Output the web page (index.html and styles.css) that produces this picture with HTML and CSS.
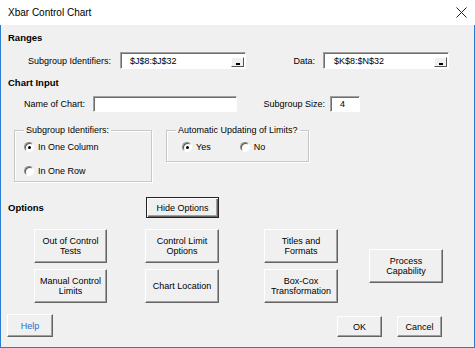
FILE: index.html
```html
<!DOCTYPE html>
<html lang="en">
<head>
    <meta charset="UTF-8">
    <title>Xbar Control Chart</title>
    <link rel="stylesheet" href="styles.css">
</head>
<body>
    <div class="dialog">
        <div class="titlebar">
            <span class="title">Xbar Control Chart</span>
            <svg class="close" width="11" height="11" viewBox="0 0 11 11">
                <path d="M0.5 0.5 L10.5 10.5 M10.5 0.5 L0.5 10.5" stroke="#222" stroke-width="1" fill="none"/>
            </svg>
        </div>
        <div class="form">
            <div class="heading ranges">Ranges</div>
            <div class="row ranges-row">
                <label class="lbl lbl-subgroup">Subgroup Identifiers:</label>
                <div class="refedit ref-subgroup">
                    <span class="val">$J$8:$J$32</span>
                    <span class="ref-btn"></span>
                </div>
                <label class="lbl lbl-data">Data:</label>
                <div class="refedit ref-data">
                    <span class="val">$K$8:$N$32</span>
                    <span class="ref-btn"></span>
                </div>
            </div>

            <div class="heading chart-input">Chart Input</div>
            <div class="row input-row">
                <label class="lbl lbl-name">Name of Chart:</label>
                <div class="textbox box-name"></div>
                <label class="lbl lbl-size">Subgroup Size:</label>
                <div class="textbox box-size">4</div>
            </div>

            <div class="row groups-row">
                <fieldset class="groupbox group-ids">
                    <legend>Subgroup Identifiers:</legend>
                    <div class="radio-row first">
                        <span class="radio checked"></span>In One Column
                    </div>
                    <div class="radio-row">
                        <span class="radio"></span>In One Row
                    </div>
                </fieldset>
                <fieldset class="groupbox group-auto">
                    <legend>Automatic Updating of Limits?</legend>
                    <div class="radio-line">
                        <div class="radio-row first">
                            <span class="radio checked"></span>Yes
                        </div>
                        <div class="radio-row no">
                            <span class="radio"></span>No
                        </div>
                    </div>
                </fieldset>
            </div>

            <div class="row options-row">
                <div class="heading">Options</div>
                <div class="btn btn-default hide-btn">Hide Options</div>
            </div>

            <div class="row option-buttons">
                <div class="col col1">
                    <div class="btn opt">Out of Control<br>Tests</div>
                    <div class="btn opt">Manual Control<br>Limits</div>
                </div>
                <div class="col col2">
                    <div class="btn opt">Control Limit<br>Options</div>
                    <div class="btn opt">Chart Location</div>
                </div>
                <div class="col col3">
                    <div class="btn opt">Titles and<br>Formats</div>
                    <div class="btn opt">Box-Cox<br>Transformation</div>
                </div>
                <div class="col col4">
                    <div class="btn opt">Process<br>Capability</div>
                </div>
            </div>

            <div class="row bottom-row">
                <div class="btn help-btn">Help</div>
                <div class="btn ok-btn">OK</div>
                <div class="btn cancel-btn">Cancel</div>
            </div>
        </div>
    </div>
</body>
</html>
```

FILE: styles.css
```css
body {
    margin: 0;
    padding: 0;
    font-family: "Liberation Sans", Arial, sans-serif;
    font-size: 9px;
    color: #000;
    background: #fff;
}
.dialog {
    width: 475px;
    height: 348px;
}
.titlebar {
    height: 25px;
    background: #fff;
    display: flex;
    align-items: center;
    padding: 0 8px;
    box-sizing: border-box;
}
.title {
    font-size: 10px;
    color: #000;
}
.close {
    margin-left: auto;
    margin-right: 0;
}
.form {
    height: 323px;
    background: #f0f0f0;
    border: 1px solid #2b7bd0;
    border-top: none;
    box-sizing: border-box;
}
.heading {
    font-weight: bold;
    font-size: 9.5px;
    line-height: 12px;
    margin-left: 7px;
}
.ranges {
    padding-top: 7px;
}
.row {
    display: flex;
    align-items: center;
}
.lbl {
    text-align: right;
    line-height: 12px;
}
.ranges-row {
    margin-top: 8px;
}
.lbl-subgroup {
    width: 92px;
    margin-left: 18px;
}
.refedit, .textbox {
    background: #fff;
    border: 1px solid;
    border-color: #a0a0a0 #fff #fff #a0a0a0;
    box-shadow: inset 1px 1px #6e6e6e;
    box-sizing: border-box;
    display: flex;
    align-items: center;
}
.refedit {
    height: 17px;
    width: 126px;
    margin-left: 9px;
}
.refedit .val {
    padding-left: 9px;
}
.ref-btn {
    margin-left: auto;
    align-self: flex-end;
    width: 13px;
    height: 10px;
    margin-bottom: 1px;
    margin-right: 1px;
    background: #f0f0f0;
    border: 1px solid;
    border-color: #fff #555 #555 #fff;
    box-sizing: border-box;
    display: flex;
    justify-content: center;
    align-items: flex-end;
}
.ref-btn::after {
    content: "";
    width: 4px;
    height: 2px;
    background: #000;
    margin-bottom: 1px;
}
.lbl-data {
    width: 56px;
    margin-left: 13px;
}
.ref-data {
    margin-left: 8px;
}
.ref-data .val {
    padding-left: 10px;
}
.chart-input {
    margin-top: 8px;
}
.input-row {
    margin-top: 7px;
}
.lbl-name {
    width: 66px;
    margin-left: 18px;
}
.textbox {
    height: 16px;
}
.box-name {
    width: 144px;
    margin-left: 8px;
}
.lbl-size {
    width: 85px;
    margin-left: 3px;
}
.box-size {
    width: 30px;
    margin-left: 5px;
    padding-left: 9px;
}
.groups-row {
    margin-top: 12px;
    align-items: flex-start;
}
.groupbox {
    margin: 0;
    padding: 0;
    border: 1px solid #c8c8c8;
    box-shadow: inset 1px 1px #fff, 1px 1px #fff;
    box-sizing: border-box;
    min-width: 0;
}
.groupbox legend {
    padding: 0 2px;
    margin-left: 9px;
    line-height: 12px;
}
.group-ids {
    width: 138px;
    height: 58px;
    margin-left: 13px;
}
.group-auto {
    width: 143px;
    height: 38px;
    margin-left: 14px;
}
.radio-row {
    display: flex;
    align-items: center;
    height: 14px;
    margin-top: 10px;
    margin-left: 9px;
}
.radio-row.first {
    margin-top: 4px;
}
.radio-line {
    display: flex;
}
.group-auto .radio-row.first {
    margin-left: 15px;
}
.group-auto .radio-row.no {
    margin-top: 4px;
    margin-left: 29px;
}
.radio {
    width: 10px;
    height: 10px;
    border-radius: 50%;
    background: #fff;
    border: 1px solid;
    border-color: #8a8a8a #fff #fff #8a8a8a;
    box-shadow: inset 1px 1px #555;
    box-sizing: border-box;
    margin-right: 4px;
    display: flex;
    align-items: center;
    justify-content: center;
}
.radio.checked::after {
    content: "";
    width: 3px;
    height: 3px;
    border-radius: 50%;
    background: #000;
}
.btn {
    background: #f0f0f0;
    border: 1px solid;
    border-color: #fff #646464 #646464 #fff;
    box-shadow: inset -1px -1px #a0a0a0;
    box-sizing: border-box;
    display: flex;
    align-items: center;
    justify-content: center;
    text-align: center;
    line-height: 10px;
}
.options-row {
    margin-top: 15px;
}
.options-row .heading {
    flex: 0 0 138px;
}
.btn-default {
    border: 1px solid #222;
    box-shadow: inset 1px 1px #fff, inset -1px -1px #646464, inset -2px -2px #a0a0a0;
}
.hide-btn {
    width: 73px;
    height: 21px;
}
.option-buttons {
    margin-top: 11px;
    align-items: center;
}
.col {
    display: flex;
    flex-direction: column;
    gap: 6px;
}
.opt {
    height: 34px;
    width: 74px;
}
.col1 {
    margin-left: 33px;
}
.col1 .opt {
    width: 73px;
}
.col2 {
    margin-left: 38px;
}
.col3 {
    margin-left: 45px;
}
.col4 {
    margin-left: 31px;
}
.bottom-row {
    margin-top: 11px;
    align-items: flex-end;
}
.help-btn {
    width: 46px;
    height: 23px;
    margin-left: 6px;
    color: #1c6fd6;
}
.ok-btn {
    width: 45px;
    height: 21px;
    margin-left: 284px;
}
.cancel-btn {
    width: 45px;
    height: 21px;
    margin-left: 15px;
}
```
